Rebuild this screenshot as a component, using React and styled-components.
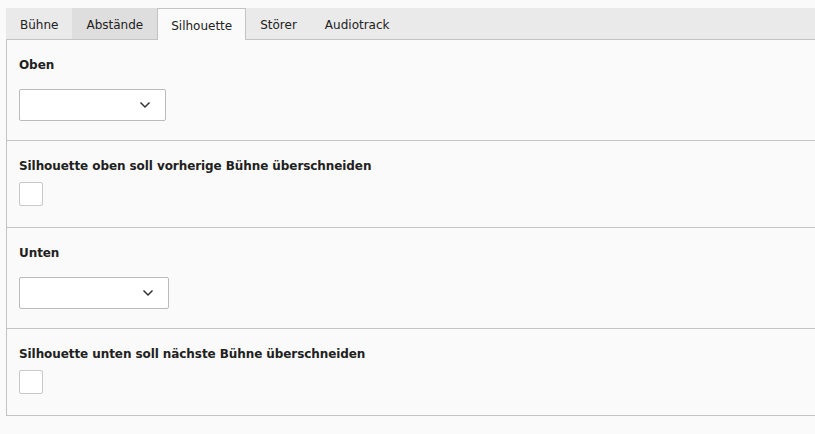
import React from "react";
import styled, { createGlobalStyle } from "styled-components";

const GlobalStyle = createGlobalStyle`
  html, body {
    margin: 0;
    padding: 0;
    background: #fafafa;
    overflow: hidden;
  }
  body {
    font-family: "DejaVu Sans", Verdana, sans-serif;
    font-size: 12px;
    color: #212121;
  }
`;

const tabs = ["Bühne", "Abstände", "Silhouette", "Störer", "Audiotrack"];

const App = () => {
  return (
    <Page>
      <GlobalStyle />
      <TabBar>
        {tabs.map((t) => (
          <Tab key={t} active={t === "Silhouette"} hovered={t === "Abstände"}>
            {t}
          </Tab>
        ))}
      </TabBar>
      <Panel>
        <Section>
          <Label>Oben</Label>
          <Select width={147}>
            <Chevron />
          </Select>
        </Section>
        <Section check>
          <Label check>Silhouette oben soll vorherige Bühne überschneiden</Label>
          <Checkbox />
        </Section>
        <Section>
          <Label>Unten</Label>
          <Select width={150}>
            <Chevron />
          </Select>
        </Section>
        <Section check last>
          <Label check>Silhouette unten soll nächste Bühne überschneiden</Label>
          <Checkbox />
        </Section>
      </Panel>
    </Page>
  );
};

const Chevron = () => (
  <ChevronIcon width="12" height="8" viewBox="0 0 12 8">
    <path d="M1.5 1.5 L6 6 L10.5 1.5" fill="none" stroke="#333" strokeWidth="1.5" />
  </ChevronIcon>
);

const Page = styled.div`
  padding: 8px 0 0 6px;
  width: 830px;
`;

const TabBar = styled.div`
  display: flex;
  height: 31px;
  background: #eaeaea;
  border-bottom: 1px solid #c3c3c3;
`;

const Tab = styled.div`
  box-sizing: border-box;
  display: flex;
  align-items: center;
  padding: 2px ${(p) => (p.active ? "13px" : "14px")} 0;
  height: ${(p) => (p.active ? "32px" : "31px")};
  background: ${(p) => (p.active ? "#fafafa" : p.hovered ? "#dedede" : "transparent")};
  border: ${(p) => (p.active ? "1px solid #c3c3c3" : "none")};
  border-bottom: none;
  position: relative;
  z-index: 1;
  color: #212121;
`;

const Panel = styled.div`
  border-left: 1px solid #c3c3c3;
  border-bottom: 1px solid #c3c3c3;
`;

const Section = styled.div`
  display: flex;
  flex-direction: column;
  align-items: flex-start;
  padding: 16px 12px ${(p) => (p.check ? "21px" : "19px")};
  border-bottom: ${(p) => (p.last ? "none" : "1px solid #c3c3c3")};
`;

const Label = styled.div`
  font-weight: bold;
  line-height: 18px;
  letter-spacing: -0.08px;
  margin-bottom: ${(p) => (p.check ? "7px" : "15px")};
`;

const Select = styled.div`
  box-sizing: border-box;
  width: ${(p) => p.width}px;
  height: 32px;
  background: #fff;
  border: 1px solid #bbb;
  border-radius: 2px;
  display: flex;
  align-items: center;
  justify-content: flex-end;
  padding-right: 14px;
`;

const ChevronIcon = styled.svg`
  display: block;
`;

const Checkbox = styled.div`
  box-sizing: border-box;
  width: 24px;
  height: 24px;
  background: #fff;
  border: 1px solid #c8c8c8;
  border-radius: 2px;
`;

export default App;
